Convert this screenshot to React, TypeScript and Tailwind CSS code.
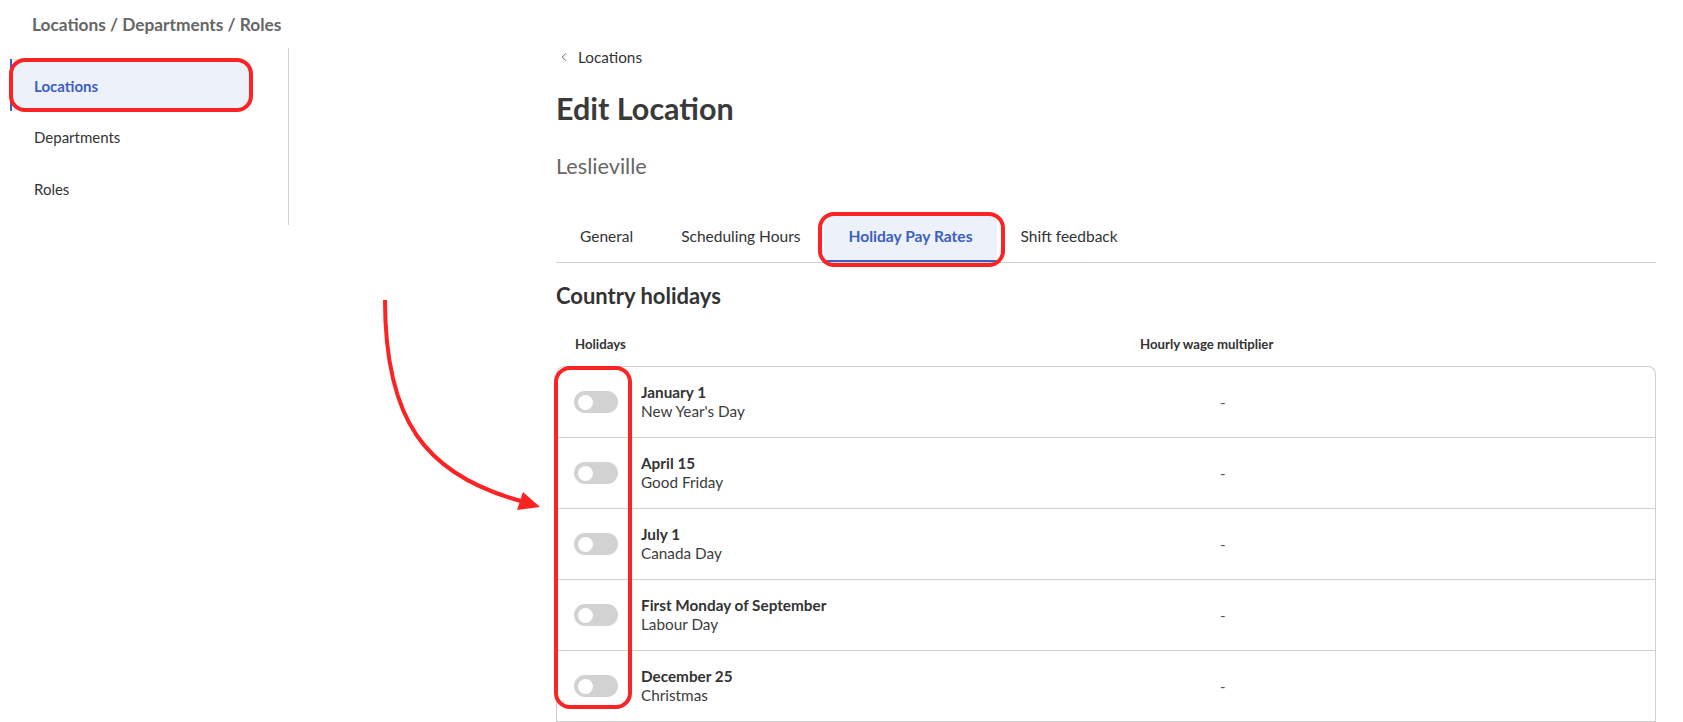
import { ChevronLeft } from "lucide-react";

const holidays = [
  { date: "January 1", name: "New Year's Day" },
  { date: "April 15", name: "Good Friday" },
  { date: "July 1", name: "Canada Day" },
  { date: "First Monday of September", name: "Labour Day" },
  { date: "December 25", name: "Christmas" },
];

const tabs = ["General", "Scheduling Hours", "Holiday Pay Rates", "Shift feedback"];

function Toggle() {
  return (
    <div className="flex h-[22px] w-[44px] shrink-0 items-center rounded-full bg-[#d2d2d2] pl-[4px]">
      <div className="h-[15px] w-[15px] rounded-full bg-white" />
    </div>
  );
}

export default function App() {
  return (
    <div className="relative h-[722px] overflow-hidden bg-white font-['Lato',sans-serif] text-[#333]">
      <div className="pl-[32px] pt-[15px] text-[17.3px] font-bold leading-[20px] text-[#666]">
        Locations / Departments / Roles
      </div>

      <div className="mt-[13px] flex">
        {/* side nav */}
        <nav className="h-[177px] w-[289px] shrink-0 border-r border-[#d0d0d0] pt-[11px]">
          <div className="ml-[10px] flex h-[52px] w-[242px] items-center rounded-r-[6px] border-l-2 border-[#3c5fc0] bg-[#edf1f9] pl-[22px] pt-[2px] text-[15px] font-bold text-[#3c5fc0]">
            Locations
          </div>
          <div className="ml-[10px] flex h-[52px] items-center pl-[24px] text-[15px] text-[#333]">Departments</div>
          <div className="ml-[10px] flex h-[52px] items-center pl-[24px] text-[15px] text-[#333]">Roles</div>
        </nav>

        <main className="ml-[267px] w-[1100px]">
          <div className="flex h-[18px] items-center text-[15.3px] text-[#333]">
            <ChevronLeft className="ml-[1px] h-[14px] w-[14px] text-[#555]" strokeWidth={1.5} />
            <span className="ml-[7px]">Locations</span>
          </div>

          <h1 className="mt-[24px] text-[30.5px] font-bold leading-[36px] text-[#3a3a3a]">Edit Location</h1>
          <div className="mt-[26px] text-[21.7px] leading-[28px] text-[#666]">Leslieville</div>

          {/* tabs */}
          <div className="mt-[36px] flex border-b border-[#d0d0d0]">
            {tabs.map((t) => {
              const active = t === "Holiday Pay Rates";
              return (
                <div
                  key={t}
                  className={
                    active
                      ? "border-b-2 border-[#3c5fc0] bg-[#edf1f9] px-[24px] pt-[10px] pb-[14px] text-[15.6px] font-bold leading-[20px] text-[#3c5fc0]"
                      : "px-[24px] pt-[10px] pb-[16px] text-[15.5px] leading-[20px] text-[#333]"
                  }
                >
                  {t}
                </div>
              );
            })}
          </div>

          <h2 className="mt-[19px] text-[22px] font-bold leading-[28px] text-[#333]">Country holidays</h2>

          <div className="mt-[26px] flex text-[13.2px] font-bold leading-[16px] text-[#333]">
            <div className="w-[584px] pl-[19px]">Holidays</div>
            <div>Hourly wage multiplier</div>
          </div>

          <div className="mt-[14px] rounded-t-[8px] border-x border-t border-[#d0d0d0] pb-[20px]">
            {holidays.map((h) => (
              <div key={h.date} className="flex h-[71px] items-center border-b border-[#d0d0d0]">
                <div className="flex w-[584px] items-center pl-[17px]">
                  <Toggle />
                  <div className="ml-[23px] text-[15.3px] leading-[19px]">
                    <div className="font-bold text-[#333]">{h.date}</div>
                    <div className="text-[#3c3c3c]">{h.name}</div>
                  </div>
                </div>
                <div className="pl-[79px] text-[15px] text-[#555]">-</div>
              </div>
            ))}
          </div>
        </main>
      </div>

      {/* callouts */}
      <div className="pointer-events-none absolute left-[9px] top-[58px] h-[54px] w-[244px] rounded-[16px] border-[4px] border-[#fb2323]" />
      <div className="pointer-events-none absolute left-[818px] top-[212px] h-[55px] w-[187px] rounded-[16px] border-[4px] border-[#fb2323]" />
      <div className="pointer-events-none absolute left-[554px] top-[366px] h-[343px] w-[78px] rounded-[16px] border-[4px] border-[#fb2323]" />
      <svg className="pointer-events-none absolute left-0 top-0" width="1683" height="722">
        <path d="M385 300 C 385 420, 425 475, 521 501" fill="none" stroke="#fb2323" strokeWidth="4" />
        <polygon points="540,507 517,510 523,492" fill="#fb2323" />
      </svg>
    </div>
  );
}
